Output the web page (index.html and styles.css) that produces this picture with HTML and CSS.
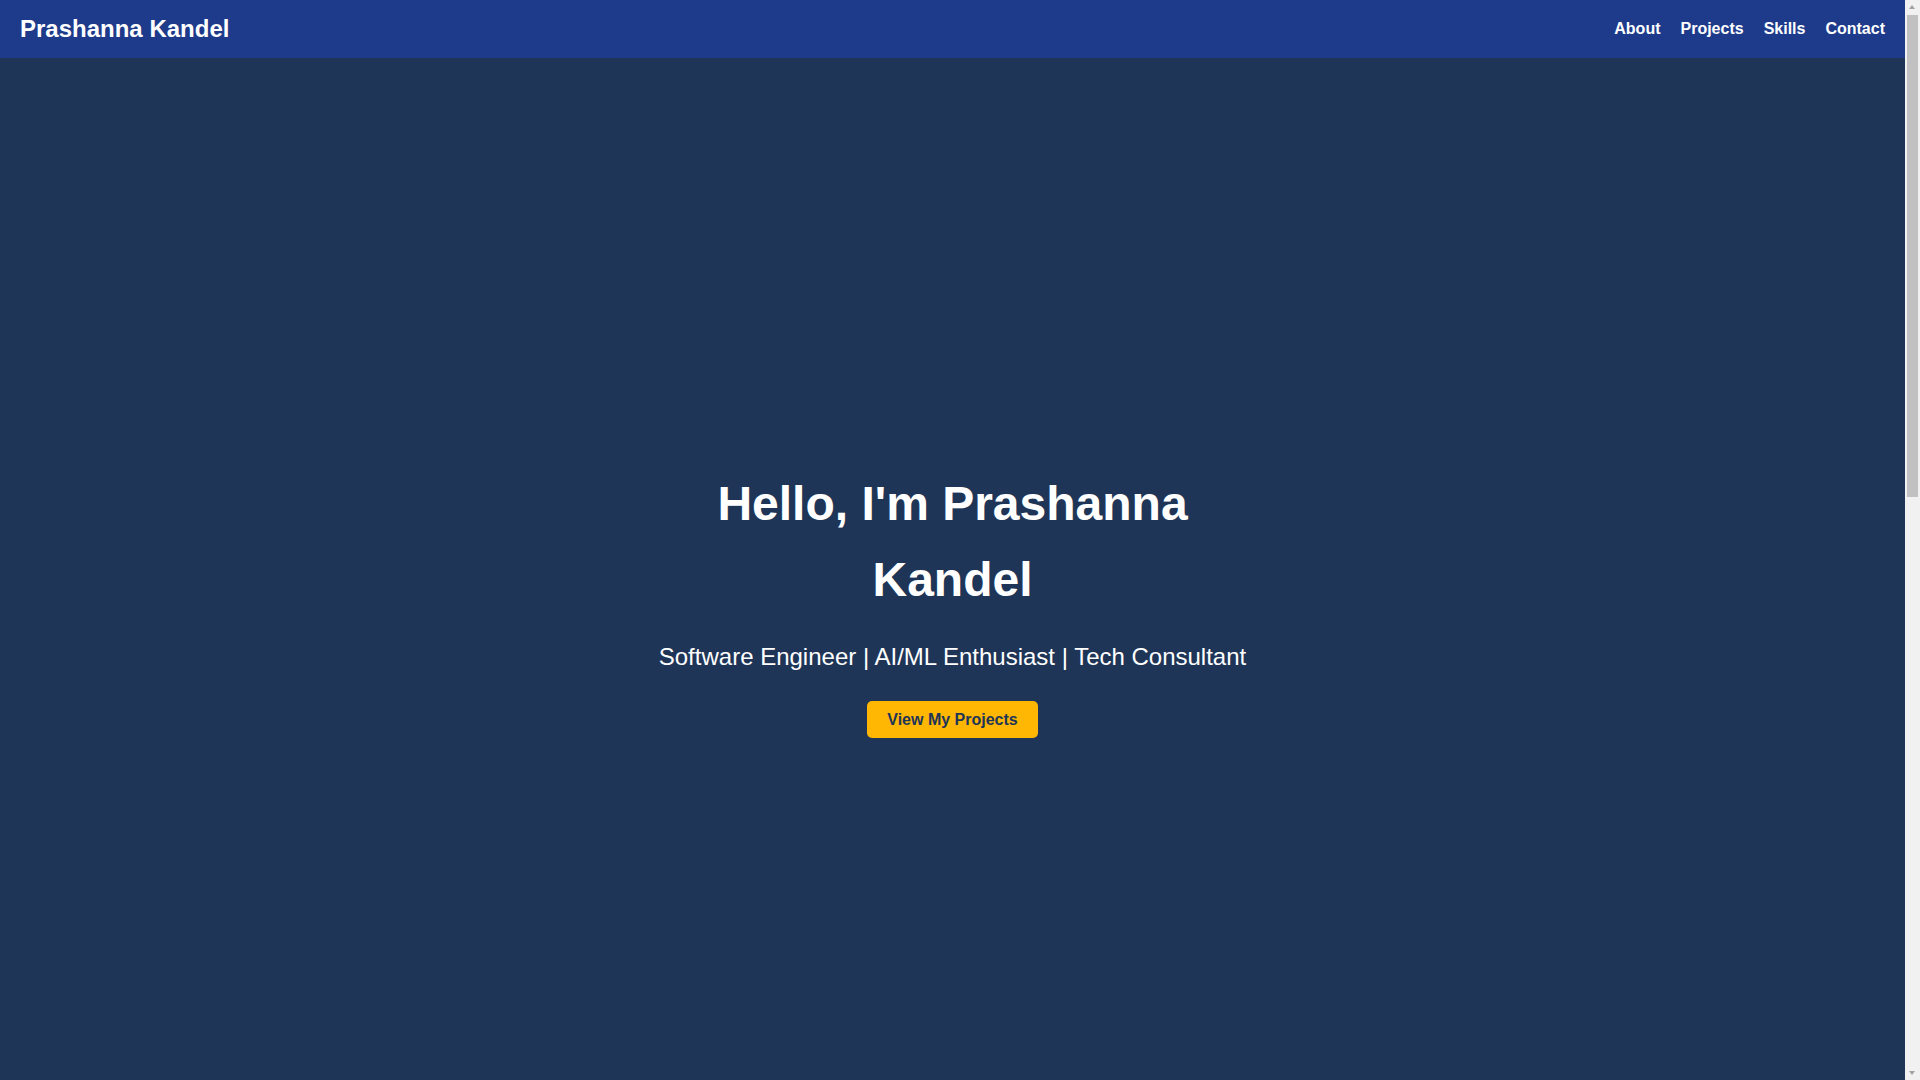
FILE: index.html
```html
<!DOCTYPE html>
<html lang="en">
<head>
<meta charset="utf-8">
<title>Prashanna Kandel</title>
<link rel="stylesheet" href="styles.css">
</head>
<body>
<header class="site-header">
  <div class="logo">Prashanna Kandel</div>
  <nav class="nav">
    <a href="#about">About</a>
    <a href="#projects">Projects</a>
    <a href="#skills">Skills</a>
    <a href="#contact">Contact</a>
  </nav>
</header>
<section class="hero">
  <div class="hero-inner">
    <h1 class="hero-title">Hello, I'm Prashanna Kandel</h1>
    <p class="hero-sub">Software Engineer | AI/ML Enthusiast | Tech Consultant</p>
    <a class="btn" href="#projects">View My Projects</a>
  </div>
</section>
<section class="below" id="about"></section>
<div class="scrollbar" aria-hidden="true">
  <div class="sb-arrow sb-up"></div>
  <div class="sb-track"><div class="sb-thumb"></div></div>
  <div class="sb-arrow sb-down"></div>
</div>
</body>
</html>
```
FILE: styles.css
```css
html, body {
  margin: 0;
  padding: 0;
}
body {
  font-family: "Liberation Sans", Arial, sans-serif;
  line-height: 1.6;
  background: #1e3557;
  color: #ffffff;
  margin-right: 15px;
}
.site-header {
  display: flex;
  justify-content: space-between;
  align-items: center;
  padding: 10px 20px;
  background: #1e3a8a;
}
.logo {
  font-size: 24px;
  font-weight: bold;
  line-height: 38px;
}
.nav {
  display: flex;
  gap: 20px;
}
.nav a {
  color: #ffffff;
  text-decoration: none;
  font-weight: bold;
  font-size: 16px;
}
.hero {
  min-height: 100vh;
  box-sizing: border-box;
  padding-top: 8px;
  display: flex;
  align-items: center;
  justify-content: center;
  text-align: center;
  background: #1e3557;
}
.hero-inner {
  max-width: 600px;
  display: flex;
  flex-direction: column;
  align-items: center;
}
.hero-title {
  font-size: 48px;
  font-weight: bold;
  line-height: 1.6;
  margin: 0 0 19px;
}
.hero-sub {
  font-size: 24px;
  margin: 0 0 25px;
  white-space: nowrap;
}
.btn {
  display: inline-block;
  background: #ffb703;
  color: #1e3557;
  font-weight: bold;
  font-size: 16px;
  line-height: 19px;
  padding: 9px 20px;
  border-radius: 5px;
  text-decoration: none;
}
.below {
  height: 1216px;
  background: #1e3557;
}
.scrollbar {
  position: fixed;
  top: 0;
  right: 0;
  width: 15px;
  height: 100vh;
  background: #f1f1f1;
  display: flex;
  flex-direction: column;
}
.sb-arrow {
  height: 15px;
  flex: none;
  position: relative;
}
.sb-up::after,
.sb-down::after {
  content: "";
  position: absolute;
  left: 4px;
  width: 0;
  height: 0;
  border-left: 3.5px solid transparent;
  border-right: 3.5px solid transparent;
}
.sb-up::after {
  top: 5px;
  border-bottom: 4px solid #a3a3a3;
}
.sb-down::after {
  top: 6px;
  border-top: 4px solid #a3a3a3;
}
.sb-track {
  flex: 1;
  padding: 0 2px;
}
.sb-thumb {
  height: 482px;
  background: #c1c1c1;
}
```
